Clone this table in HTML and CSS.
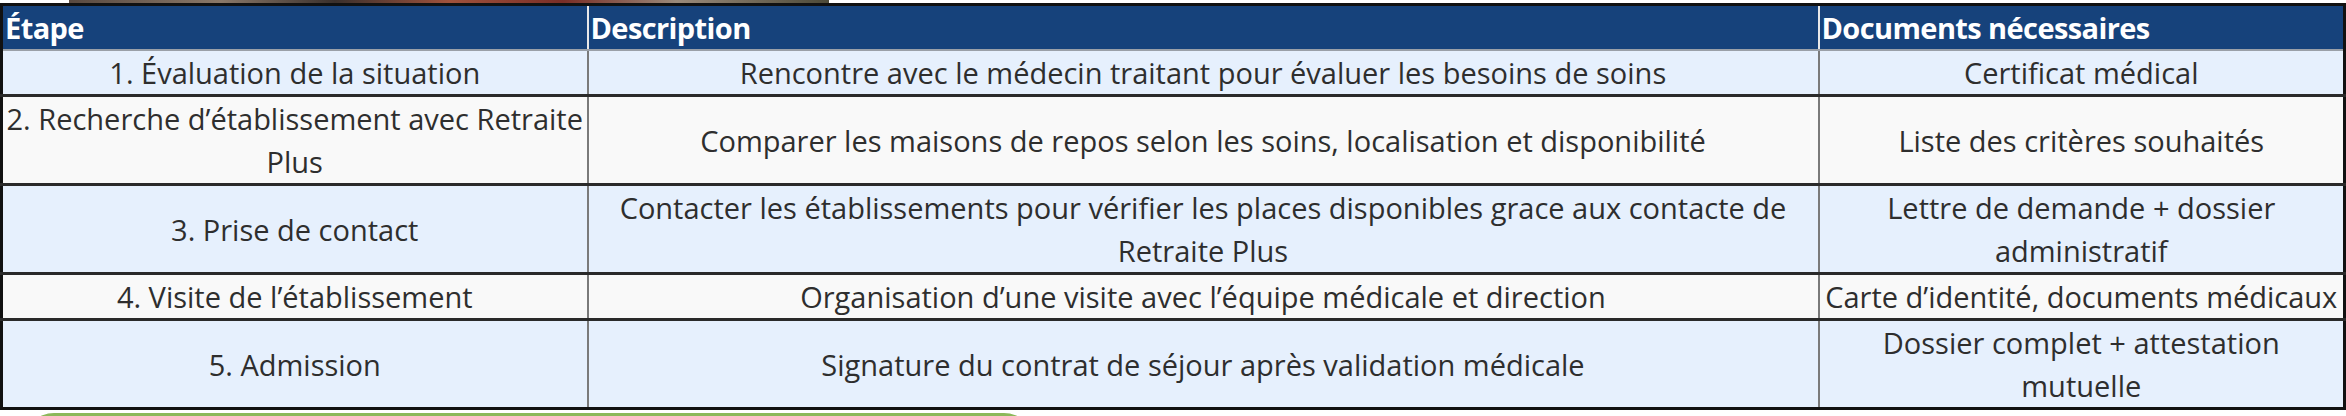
FILE: index.html
```html
<!DOCTYPE html>
<html lang="fr">
<head>
<meta charset="utf-8">
<link rel="stylesheet" href="styles.css">
</head>
<body>
<div class="photo-strip"></div>
<table class="steps">
  <colgroup>
    <col class="c1"><col class="c2"><col class="c3">
  </colgroup>
  <thead>
    <tr><th>Étape</th><th>Description</th><th>Documents nécessaires</th></tr>
  </thead>
  <tbody>
    <tr class="odd"><td>1. Évaluation de la situation</td><td>Rencontre avec le médecin traitant pour évaluer les besoins de soins</td><td>Certificat médical</td></tr>
    <tr class="even"><td>2. Recherche d’établissement avec Retraite Plus</td><td>Comparer les maisons de repos selon les soins, localisation et disponibilité</td><td>Liste des critères souhaités</td></tr>
    <tr class="odd"><td>3. Prise de contact</td><td>Contacter les établissements pour vérifier les places disponibles grace aux contacte de Retraite Plus</td><td>Lettre de demande + dossier administratif</td></tr>
    <tr class="even"><td>4. Visite de l’établissement</td><td>Organisation d’une visite avec l’équipe médicale et direction</td><td>Carte d’identité, documents médicaux</td></tr>
    <tr class="odd"><td>5. Admission</td><td>Signature du contrat de séjour après validation médicale</td><td>Dossier complet + attestation mutuelle</td></tr>
  </tbody>
</table>
<div class="green-wrap"><div class="green-tab"></div></div>
</body>
</html>
```
FILE: styles.css
```css
html, body {
  margin: 0;
  padding: 0;
  background: #ffffff;
  overflow: hidden;
}
body {
  font-family: "Open Sans", "Noto Sans", sans-serif;
  color: #2e2e2e;
  width: 2346px;
  height: 416px;
}
.photo-strip {
  height: 3px;
  margin-left: 69px;
  width: 760px;
  background: linear-gradient(90deg, #5a4a40 0%, #8a7868 20%, #3a302c 35%, #a0523c 50%, #7a2e26 65%, #9a8a7a 80%, #4d4a38 100%);
}
.steps {
  border-collapse: collapse;
  width: 2343px;
  table-layout: fixed;
  border: 3px solid #111;
  font-size: 29px;
  line-height: 43px;
}
.c1 { width: 586px; }
.c2 { width: 1231px; }
.c3 { width: 526px; }
.steps th {
  background: #16427b;
  color: #ffffff;
  font-weight: 700;
  text-align: left;
  padding: 0 2px;
  height: 42px;
  border: 2px solid #e8e8e8;
  border-top: 3px solid #111;
  border-bottom: 2px solid #9aa0a8;
  font-size: 29px;
  letter-spacing: -0.6px;
}
.steps td {
  text-align: center;
  vertical-align: middle;
  padding: 0 2px;
  border: 2px solid #7a7a7a;
}
.steps tr.odd td { background: #e6f0fd; }
.steps tr.even td { background: #f9f9f9; }
.steps tbody tr + tr td { border-top: 3px solid #2a2a2a; }
.green-wrap {
  margin-top: 3px;
  height: 5px;
  overflow: hidden;
}
.green-tab {
  margin-left: 24px;
  width: 1010px;
  height: 30px;
  background: #8cb85a;
  border-radius: 40px 40px 0 0;
}
```
